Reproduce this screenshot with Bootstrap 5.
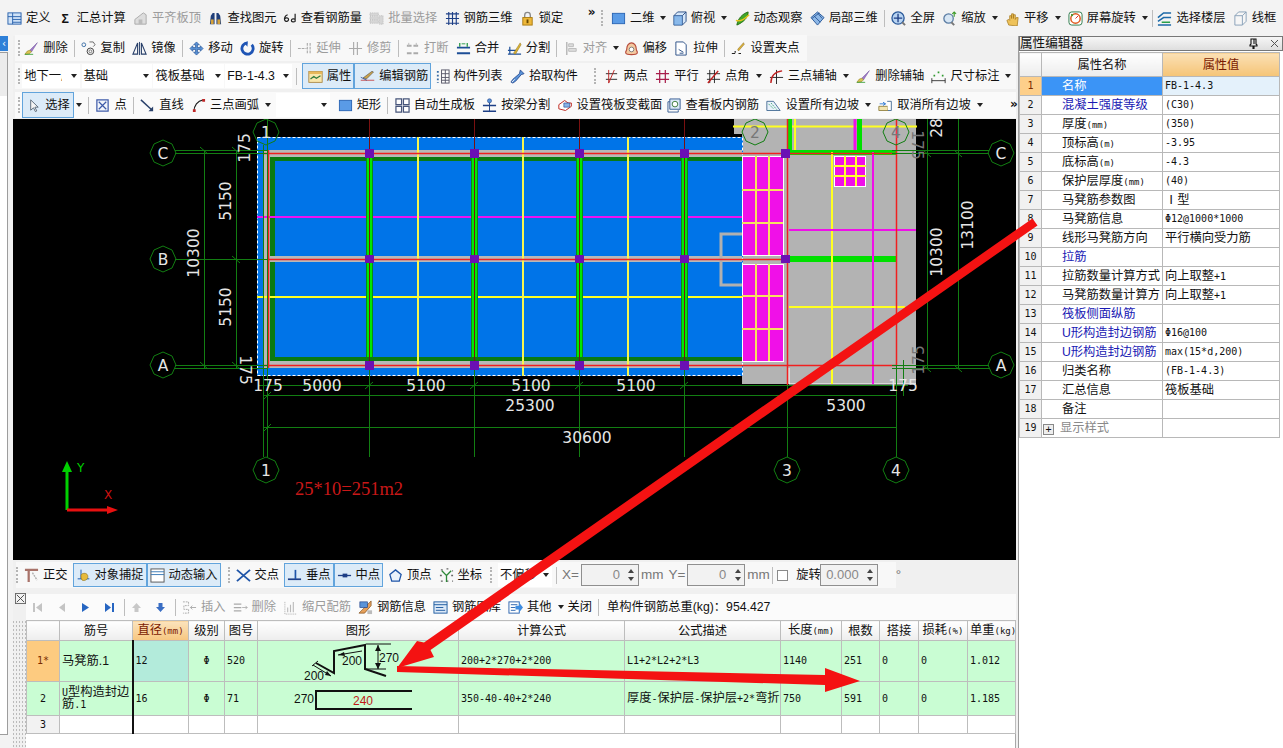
<!DOCTYPE html>
<html lang="zh">
<head>
<meta charset="utf-8">
<title>属性编辑器</title>
<link href="https://cdn.jsdelivr.net/npm/bootstrap@5.3.0/dist/css/bootstrap.min.css" rel="stylesheet">
<style>
html,body{height:100%;}
body{width:1283px;height:748px;overflow:hidden;background:#f0f0f0;color:#111;font:12.25px/16px "Liberation Sans","Noto Sans CJK SC",sans-serif;}
.top-shell{position:relative;width:1283px;height:748px;overflow:hidden;}
.tbar{display:flex;align-items:center;gap:7.3px;white-space:nowrap;}
.r1{height:36px;padding-left:7px;background:#f3f3f3;}
.r2{height:26px;width:792px;margin-left:2px;padding-left:3px;background:#f8f8f8;margin-bottom:2px;margin-top:-1px;}
.r3{height:26px;padding-left:3px;margin-left:2px;background:#f8f8f8;margin-bottom:3px;}
.r4{height:26px;padding-left:3px;margin-left:2px;background:#fafafa;margin-bottom:1px;}
.ti{display:inline-flex;align-items:center;gap:4px;}
.ti svg,.ic{width:15px;height:15px;flex:none;}
.off{color:#9c9c9c;}
.on{border:1px solid #62a4dc;background:#dcebf8;height:24px;padding:0 2px;}
.r3 .on{height:26px;padding:0 2px 0 5px;}
.r4 .on{height:26px;padding:0 3px;}
.car{display:inline-block;width:0;height:0;border:3px solid transparent;border-top:4px solid #222;border-bottom:0;margin-left:2px;flex:none;}
.sepv{width:1px;height:17px;background:#bdbdbd;flex:none;margin:0 -1px;}
.grip{width:3px;height:16px;flex:none;border-left:2px dotted #b5b5b5;}
.chev{font:bold 12px/10px "DejaVu Sans",sans-serif;align-self:flex-start;margin-top:7px;}
.combo{display:inline-flex;align-items:center;justify-content:space-between;background:#fff;height:24px;padding:0 3px 0 2px;flex:none;}
.combo .car{margin:0;}
.cb-a{width:58px;}.cb-a span{display:block;width:38px;overflow:hidden;}
.cb-b{width:70.5px;}.cb-c{width:70.5px;}.cb-d{width:67px;}.cb-e{width:54px;}
.first{margin-left:-4px;}
.g1{margin-left:17px;}.g3{margin-left:20px;}.g4{margin-left:-3px;}.g5{margin-left:-6px;}.g6{margin-left:9px;}.g7{margin-left:-2px;}.g8{margin-left:2px;}.g9{margin-left:3px;}.g11{margin-left:-4px;}.g13{margin-left:13px;}
.wrap{display:flex;height:712px;}
.leftcol{width:13px;flex:none;position:relative;background:#f3f3f3;}
.tabmark{height:15px;width:8px;background:#2f80d8;color:#fff;font:10px/15px "DejaVu Sans",sans-serif;text-align:center;}
.leftpanel{height:683px;width:8px;margin-top:1px;background:linear-gradient(#ececec 0 43px,#fff 43px);border:1px solid #9d9d9d;border-left:0;}
.maincol{width:1003px;flex:none;display:flex;flex-direction:column;}
.canvas{height:441px;background:#000;flex:none;display:block;}
.canvas text{font-family:"DejaVu Sans",sans-serif;fill:#e6e6e6;font-size:15.5px;}
.snap{height:34px;padding:2px 0 6px 3px;flex:none;}
.snap .inner,.rebar .inner{display:flex;align-items:center;white-space:nowrap;height:100%;}
.snap .inner{gap:5px;background:#f8f8f8;width:880px;}
.cluster{display:flex;align-items:center;gap:2px;margin-left:1px;}
.mono{font-family:"DejaVu Sans Mono","Noto Sans CJK SC",monospace;font-size:10px;}
.spinb{width:58px;height:22px;border:1px solid #8f8f8f;background:#f2f2f2;display:flex;align-items:center;justify-content:flex-end;color:#888;font-size:13px;flex:none;}
.spinb i{display:flex;flex-direction:column;gap:4px;width:13px;align-items:center;margin-left:5px;}
.spinb b{display:block;width:0;height:0;border:3px solid transparent;}
.spinb b.u{border-bottom:4px solid #444;border-top:0;}
.spinb b.d{border-top:4px solid #444;border-bottom:0;}
.chk{width:11px;height:11px;border:1px solid #8a8a8a;background:#fff;flex:none;}
.gt{color:#777;font-size:13.5px;}
.rebar{height:26px;flex:none;display:flex;position:relative;}
.rb-strip{width:13px;flex:none;position:relative;}
.rebar .inner{gap:7px;background:#fbfbfb;flex:1;padding-left:3px;}
.navb{width:17px;display:flex;justify-content:center;flex:none;}
.navb svg{width:11px;height:11px;}
.x-box{position:absolute;left:2px;top:-1px;width:11px;height:11px;}
.tablearea{display:flex;flex:1;min-height:0;}
.dotstrip{width:13px;flex:none;background-image:radial-gradient(#bbb 1px,transparent 1px);background-size:3px 4px;background-position:2px 0;}
.gridcol{width:990px;flex:none;background:#fff;border-right:1px solid #a8a8a8;}
.rtable{table-layout:fixed;width:989px;border-collapse:collapse;margin:0;font-size:12.25px;line-height:12px;color:#111;}
.rtable th,.rtable td{border:1px solid #bdbdbd;padding:0 2px;vertical-align:middle;overflow:hidden;white-space:nowrap;}
.rtable thead th{height:20px;background:linear-gradient(#fff,#ededed);font-weight:400;text-align:center;}
.rtable thead th.hot{background:linear-gradient(#fbe3bd,#f7c67f);color:#7a1a00;}
.rtable tbody tr.a{height:41px;}.rtable tbody tr.b{height:32px;}.rtable tbody tr.c{height:18px;}
.rtable tbody tr.a td,.rtable tbody tr.b td{background:#c9fdd3;}
.rtable tbody td.num{background:#f2f2f2;text-align:center;}
.rtable tbody tr.a td.num{background:#fdcb80;color:#7a2a00;}
.rtable tbody tr.a td.sel{background:#b3ebdb;}
.rtable td.bl{border-right:2px solid #111;}
.rtable td.cc{text-align:center;}
.rtable td.fig{padding:0;}
.rtable td.wr{white-space:normal;line-height:11.5px;}
.fig svg{display:block;width:200px;height:100%;}
.fig text{font:12px "Liberation Sans",sans-serif;fill:#111;}
.fig text.rd{fill:#c01818;}
.mm{font-size:9px;font-family:"DejaVu Sans Mono",monospace;}
.c0{width:33px;}.c1{width:73px;}.c2{width:56px;}.c3{width:36px;}.c4{width:33px;}.c5{width:201px;}.c6{width:166px;}.c7{width:156px;}.c8{width:61px;}.c9{width:38px;}.c10{width:39px;}.c11{width:49px;}.c12{width:48px;}
.prop{width:265px;flex:none;margin-left:2px;background:#fff;border-left:1px solid #9d9d9d;display:flex;flex-direction:column;}
.ptitle{height:15px;display:flex;align-items:center;justify-content:space-between;background:linear-gradient(#f6f6f6,#dedede);border:1px solid #777;font-size:12.6px;line-height:13px;padding:0 3px 0 0;flex:none;}
.ptitle span.pins{display:flex;gap:12px;align-items:center;font-family:"DejaVu Sans",sans-serif;}
.ptbl{table-layout:fixed;width:260px;border-collapse:collapse;margin:1px 0 0;font-size:12.25px;line-height:14px;color:#111;}
.ptbl th,.ptbl td{border:1px solid #b8b8b8;padding:0 2px;height:19px;overflow:hidden;white-space:nowrap;vertical-align:middle;}
.ptbl thead th{height:24px;background:linear-gradient(#fff,#ececec);font-weight:400;text-align:center;}
.ptbl thead th.hot{background:linear-gradient(#fbe0b5,#f5c476);color:#7a1a00;}
.ptbl td.num{background:#f1f1f1;text-align:center;font-family:"DejaVu Sans Mono",monospace;font-size:10px;padding:0;}
.ptbl td.nm{padding-left:20px;}
.ptbl tr.act td.num{background:#fdcf8a;color:#7a2a00;}
.ptbl tr.act td.nm{background:#3b94f6;color:#fff;}
.ptbl tr.act td.vl{background:#e4f1fb;}
.ptbl td.lnk{color:#1a1ab4;}
.ptbl td.gr{color:#8a8a8a;padding-left:1px;}
.ptbl .vm{font:10px/14px "DejaVu Sans Mono","Noto Sans CJK SC",monospace;}
.p1{width:22px;}.p2{width:121px;}.p3{width:117px;}
.pm{display:inline-block;width:11px;height:11px;border:1px solid #888;background:#eee;text-align:center;font:10px/9px "DejaVu Sans Mono",monospace;color:#111;margin:0 6px 0 0;vertical-align:-1px;}
.overlay{position:absolute;left:0;top:0;pointer-events:none;}
</style>
</head>
<body>
<svg width="0" height="0" class="d-none">
<defs>
<symbol id="def" viewBox="0 0 16 16"><rect x="1" y="2" width="14" height="12" fill="#cfe2f7" stroke="#2a62ad"/><path d="M1 6h14M6 2v12M6 9h9M6 12h9" stroke="#2a62ad" fill="none"/></symbol>
<symbol id="flat" viewBox="0 0 16 16"><path d="M2 14V9l9-7 3 2v10z" fill="#ddd" stroke="#aaa"/><path d="M6 14V9h4v5" fill="#bbb"/></symbol>
<symbol id="bino" viewBox="0 0 16 16"><path d="M2 14l1-9 2-3h2v12zM9 14V2h2l2 3 1 9z" fill="#1f3f7a"/><rect x="3" y="9" width="3" height="5" fill="#d6a23a"/><rect x="10" y="9" width="3" height="5" fill="#d6a23a"/></symbol>
<symbol id="sixd" viewBox="0 0 16 16"><path d="M6 4C3 5 2 8 3 10s4 1 4-1-3-2-4-1M14 3v8c-1 1-4 1-4-1s3-2 4-1" fill="none" stroke="#222" stroke-width="1.3"/></symbol>
<symbol id="batch" viewBox="0 0 16 16"><path d="M1 2h9v3H1zM1 6h9v3H1zM1 10h9v3H1zM11 5h4v9h-4z" fill="#d6d6d6" stroke="#bbb" stroke-dasharray="1 1"/></symbol>
<symbol id="r3d" viewBox="0 0 16 16"><path d="M1 3h14M1 8h14M1 13h14M4 1v14M8 1v14M12 1v14" stroke="#1d3f86" stroke-width="1.2" fill="none"/></symbol>
<symbol id="lock" viewBox="0 0 16 16"><path d="M5 7V4.500a3 3 0 016 0V7" stroke="#888" stroke-width="1.4" fill="none"/><rect x="3" y="7" width="10" height="8" fill="#eeb83a" stroke="#a97a10"/><rect x="7" y="9" width="2" height="4" fill="#6a4a00"/></symbol>
<symbol id="sq" viewBox="0 0 16 16"><rect x="1.500" y="2.500" width="13" height="11" fill="#5a9be6" stroke="#2b66b5"/></symbol>
<symbol id="cube" viewBox="0 0 16 16"><path d="M2 5l4-4h9v10l-4 4H2z" fill="#d5e6f8" stroke="#2b4f86"/><path d="M2 5h9v10M11 5l4-4" fill="none" stroke="#2b4f86"/><path d="M2 5h9v10H2z" fill="#4d93de" fill-opacity=".55"/></symbol>
<symbol id="orbit" viewBox="0 0 16 16"><path d="M2 15C3 8 8 3 14 1c0 6-5 11-12 14z" fill="#42a828" stroke="#1f6b12"/><path d="M1 10c5 2 10-2 14-6" stroke="#e6c31d" stroke-width="1.6" fill="none"/></symbol>
<symbol id="loc3" viewBox="0 0 16 16"><path d="M8 1l7 6-7 8-7-8z" fill="#8db7e6" stroke="#2b5a9a"/><path d="M4 5l7 7M8 2l5 6M2 8l8-6" stroke="#2b5a9a" fill="none"/></symbol>
<symbol id="fit" viewBox="0 0 16 16"><circle cx="7.500" cy="7.500" r="6.500" fill="#b8d4f2" stroke="#2b5a9a" stroke-width="1.4"/><path d="M7.500 3v9M3 7.500h9" stroke="#1f3f86" stroke-width="1.4"/><path d="M12 12l3 3" stroke="#777" stroke-width="2"/></symbol>
<symbol id="zm" viewBox="0 0 16 16"><circle cx="7" cy="8" r="5" fill="#d7e6f4" stroke="#5a7ca3" stroke-width="1.4"/><path d="M10 12l3 3" stroke="#777" stroke-width="2"/><path d="M13 1v5M11 3l2-2 2 2" fill="none" stroke="#3c9a2a" stroke-width="1.2"/></symbol>
<symbol id="hand" viewBox="0 0 16 16"><path d="M4 15l-2-5 2-1 1 1V5h2v3-5h2v5-4h2v5l1-2h2l-1 9z" fill="#eec25a" stroke="#a87c20" stroke-width=".8"/></symbol>
<symbol id="rott" viewBox="0 0 16 16"><rect x="1" y="1" width="14" height="14" rx="3" fill="#fff" stroke="#2b7a4a"/><circle cx="8" cy="8" r="5" fill="#fff" stroke="#e05a20" stroke-width="1.6"/><path d="M8 8l3-3" stroke="#d22"/><path d="M3 3l3 1-2 2z" fill="#2a9a2a"/></symbol>
<symbol id="floors" viewBox="0 0 16 16"><path d="M1 7l6-5h8M1 11l6-4h8M1 15h14" fill="none" stroke="#1c6aa8" stroke-width="1.6"/><path d="M5 12h9" stroke="#2aa04a" stroke-width="1.6"/></symbol>
<symbol id="wire" viewBox="0 0 16 16"><path d="M2 5l4-4h8v10l-4 4H2zM2 5h8v10M10 5l4-4" fill="#f6f6f6" stroke="#88a0b8"/></symbol>
<symbol id="brush" viewBox="0 0 18 16"><path d="M16 1L7 10l2 2z" fill="#a079c8" stroke="#6a4a9a" stroke-width=".6"/><path d="M7 10l-3 1-3 4c3 0 6 0 8-3z" fill="#d9c252" stroke="#8a7a1a" stroke-width=".6"/><path d="M1 15h10" stroke="#2f9a2f"/></symbol>
<symbol id="copy" viewBox="0 0 16 16"><circle cx="3" cy="4" r="2" fill="none" stroke="#3a6ea5"/><circle cx="10" cy="11" r="3.500" fill="none" stroke="#3a3a3a"/><circle cx="10" cy="11" r="1.500" fill="none" stroke="#777"/><path d="M9 1h4l2 3-2 2" fill="none" stroke="#666"/></symbol>
<symbol id="mir" viewBox="0 0 16 16"><path d="M6 2L1 14h5zM10 2l5 12h-5z" fill="none" stroke="#29406a" stroke-width="1.2"/><path d="M8 1v14" stroke="#29406a"/></symbol>
<symbol id="mv" viewBox="0 0 16 16"><path d="M8 1l3 3H9v3h3V5l3 3-3 3V9H9v3h2l-3 3-3-3h2V9H4v2L1 8l3-3v2h3V4H5z" fill="#5b93d6" stroke="#1f4f96" stroke-width=".7"/></symbol>
<symbol id="rot" viewBox="0 0 16 16"><path d="M8 2a6 6 0 104.500 2" fill="none" stroke="#1f55b5" stroke-width="3"/><path d="M8 0v6l-3-3z" fill="#1f55b5"/></symbol>
<symbol id="ext" viewBox="0 0 16 16"><path d="M1 8h9M11 2v12M14 2v12" stroke="#aaa" stroke-width="1.2" fill="none" stroke-dasharray="3 1"/></symbol>
<symbol id="trim" viewBox="0 0 16 16"><path d="M6 1v14M10 1v14M1 8h14" stroke="#aaa" stroke-width="1.2" fill="none"/></symbol>
<symbol id="brk" viewBox="0 0 16 16"><path d="M2 5h12M2 13h12" stroke="#aaa" stroke-width="2" stroke-dasharray="5 2"/><path d="M4 2v4M12 2v4" stroke="#bbb"/></symbol>
<symbol id="mrg" viewBox="0 0 16 16"><path d="M1 7h14M1 13h14" stroke="#1d4e96" stroke-width="2"/><path d="M4 2v4M12 2v4" stroke="#2a9a4a" stroke-width="1.4"/><path d="M6 3h4" stroke="#2a9a4a"/></symbol>
<symbol id="spl" viewBox="0 0 16 16"><path d="M1 14h14M1 10h10M3 6v8" stroke="#1d4e96" stroke-width="1.3" fill="none"/><path d="M7 13L14 2l1 2-6 10z" fill="#dbb436" stroke="#8a6a10" stroke-width=".5"/></symbol>
<symbol id="algn" viewBox="0 0 16 16"><path d="M3 1v14" stroke="#aaa" stroke-width="1.3"/><path d="M5 3h5v3H5zM5 8h8v3H5z" fill="#ddd" stroke="#bbb"/></symbol>
<symbol id="ofs" viewBox="0 0 16 16"><path d="M8 2c3 0 5 3 5 6s2 3 1 5-11 2-12 0 1-2 1-5 2-6 5-6z" fill="#f3c9a0" stroke="#b64a3a" stroke-width="1.2"/><circle cx="8" cy="9" r="2.500" fill="#fff" stroke="#7a7a7a"/></symbol>
<symbol id="str" viewBox="0 0 16 16"><path d="M2 1h8l3 3v11H2z" fill="#fff" stroke="#2b4f86"/><path d="M5 9l5 3M6 13h4" stroke="#2b4f86" fill="none"/></symbol>
<symbol id="grp" viewBox="0 0 18 16"><path d="M15 1L8 9l1 2 7-8z" fill="#d9b13a" stroke="#7a5a10" stroke-width=".5"/><path d="M1 14h4M9 14h3M5 11v2" stroke="#222" stroke-width="1.4"/></symbol>
<symbol id="attr" viewBox="0 0 18 16"><rect x="1" y="2" width="16" height="13" fill="#f9e7ad" stroke="#a6803a"/><path d="M1 2h16v3H1z" fill="#e7b85a"/><path d="M3 11l4-3 3 2 5-3" stroke="#2f7a3a" stroke-width="1.5" fill="none"/></symbol>
<symbol id="edit" viewBox="0 0 20 16"><path d="M1 13h18" stroke="#c02828"/><path d="M4 10l5 1L18 2l-2-1z" fill="#caa24a" stroke="#444" stroke-width=".7"/><path d="M1 9l8 4" stroke="#1d3f86"/></symbol>
<symbol id="list" viewBox="0 0 16 16"><path d="M2 2h2v2H2zM2 6h2v2H2zM2 10h2v2H2zM2 14h2v1H2z" fill="#3a6ea5"/><rect x="7" y="1" width="8" height="14" fill="#fff" stroke="#556"/><path d="M7 5h8M7 9h8M7 12h8M11 1v14" stroke="#556"/></symbol>
<symbol id="pick" viewBox="0 0 16 16"><path d="M11 1l4 4-3 1-6 7-3 2-2-1 2-3 7-6z" fill="#5a93d8" stroke="#1d3f86" stroke-width=".8"/><path d="M2 14l3-3" stroke="#eee"/></symbol>
<symbol id="two" viewBox="0 0 16 16"><path d="M2 5h12M2 11h12" stroke="#222"/><path d="M5 1v14M11 1l-6 14" stroke="#b22"/></symbol>
<symbol id="para" viewBox="0 0 16 16"><path d="M5 1v14M11 1v14M1 5h14M1 11h14" stroke="#a81c4a" stroke-width="1.3"/></symbol>
<symbol id="ang" viewBox="0 0 16 16"><path d="M1 5h14M1 11h14M4 1v14M9 1v14" stroke="#222"/><path d="M2 15L13 2" stroke="#c02020" stroke-width="1.6"/></symbol>
<symbol id="tri" viewBox="0 0 16 16"><path d="M8 1v15M1 9h14" stroke="#222"/><path d="M2 15C2 8 6 3 14 2" stroke="#c02020" stroke-width="1.5" fill="none"/></symbol>
<symbol id="dim" viewBox="0 0 18 16"><path d="M1 13h16M1 10v6M17 10v6" stroke="#222"/><path d="M3 7h2M8 3h2M13 7h2" stroke="#2f9a2f" stroke-width="2"/></symbol>
<symbol id="arrowc" viewBox="0 0 16 16"><path d="M5 2v11l3-2.500 2 4 1.500-.7-2-4H13z" fill="#f5f5f5" stroke="#5a6a7a"/></symbol>
<symbol id="pnt" viewBox="0 0 16 16"><rect x="2" y="2" width="12" height="12" fill="#f2f6fb" stroke="#3d5aa8" stroke-width="1.3"/><path d="M4 4l8 8M12 4l-8 8" stroke="#3d5aa8" stroke-width="1.3"/></symbol>
<symbol id="lin" viewBox="0 0 16 16"><path d="M1 2l12 11" stroke="#29406a" stroke-width="1.5"/><path d="M14 14v-5l-5 5z" fill="#29406a"/></symbol>
<symbol id="arc" viewBox="0 0 16 16"><path d="M3 15C3 8 7 3 13 2" stroke="#1d1d1d" stroke-width="1.2" fill="none"/><path d="M2 12h3v3H2zM12 1h3v3h-3z" fill="#c02828"/></symbol>
<symbol id="auto" viewBox="0 0 16 16"><path d="M1 1h6v6H1zM9 1h6v6H9zM1 9h6v6H1zM9 9h6v6H9z" fill="#fff" stroke="#47557a" stroke-width="1.3"/></symbol>
<symbol id="splb" viewBox="0 0 16 16"><path d="M1 8h14M1 14h14" stroke="#1d3f86" stroke-width="1.6"/><circle cx="8" cy="3" r="2.200" fill="#5a93d8" stroke="#1d3f86" stroke-width=".6"/><path d="M8 5v10" stroke="#1d3f86"/></symbol>
<symbol id="chg" viewBox="0 0 18 16"><path d="M1 7l7-5 4 3 4 0 0 4-7 5-8-2z" fill="#fff" stroke="#c03028" stroke-width="1.2"/><path d="M7 5h7v5H7z" fill="#88b3e8" stroke="#1d3f86" stroke-width=".7"/></symbol>
<symbol id="view" viewBox="0 0 16 16"><path d="M3 1h11v11H3z" fill="#dbe9f8" stroke="#385d92"/><path d="M1 4h2M1 4v11h11v-2" fill="none" stroke="#385d92"/><circle cx="8.500" cy="6.500" r="3" fill="#fff" stroke="#3b7a3b"/></symbol>
<symbol id="slp" viewBox="0 0 18 16"><path d="M1 3h8l8 11H1z" fill="#e9f2fb" stroke="#36608c"/><path d="M3 6l6 6M6 5l7 8" stroke="#36a06a" stroke-dasharray="2 1"/></symbol>
<symbol id="cnc" viewBox="0 0 18 16"><path d="M1 9h11v5H1z" fill="#f3e5b1" stroke="#8c7a36"/><path d="M11 3h5v11h-4" fill="#fff" stroke="#36608c"/><path d="M2 6h7M6 4l3 2-3 2" stroke="#1d6ed0" fill="none"/></symbol>
<symbol id="orth" viewBox="0 0 16 16"><path d="M1 2h14M5 2v13" stroke="#a8736a" stroke-width="2.400"/><path d="M9 5l5 8" stroke="#b0b0b0" stroke-width="1.500" stroke-dasharray="2 1"/></symbol>
<symbol id="snap1" viewBox="0 0 18 16"><path d="M2 12h14M6 1v11" stroke="#1c5fb5" stroke-width="1.2"/><path d="M6 8c0-3 7-4 8 0s-2 6-5 6-3-3-3-6z" fill="#e7ba3b" stroke="#8a6a10" stroke-width=".7"/></symbol>
<symbol id="dyn" viewBox="0 0 16 16"><rect x="1" y="1" width="14" height="14" fill="#fff" stroke="#555"/><path d="M1 4h14M1 7h14" stroke="#3a7ab5"/></symbol>
<symbol id="xx" viewBox="0 0 16 16"><path d="M1 2l14 12M15 2L1 14" stroke="#1f55a8" stroke-width="2"/></symbol>
<symbol id="perp" viewBox="0 0 16 16"><path d="M1 12h14" stroke="#1f3f86" stroke-width="1.8"/><path d="M9 2v10" stroke="#1f55a8" stroke-width="1.800"/></symbol>
<symbol id="midp" viewBox="0 0 16 16"><path d="M1 8h14" stroke="#1f3f86" stroke-width="1.400"/><rect x="6" y="6" width="5" height="4" fill="#1f3f86"/></symbol>
<symbol id="pent" viewBox="0 0 16 16"><path d="M8 2l6 5-2 7H4L2 7z" fill="#eaf2fb" stroke="#1f55a8" stroke-width="1.400"/></symbol>
<symbol id="crd" viewBox="0 0 16 16"><path d="M2 2h2M8 1h2M14 3h1M1 8h2M13 8h2M2 14h2M8 14h2M14 14h1" stroke="#666" stroke-width="1.4"/><path d="M8 15V8L3 3M8 8l5-5" stroke="#2f8a3a" stroke-width="1.400" fill="none"/></symbol>
<symbol id="ins" viewBox="0 0 16 16"><path d="M1 2h6v4H2v4h5v4H1" fill="none" stroke="#aaa" stroke-dasharray="2 1"/><path d="M9 8h6M11 6l-2 2 2 2" stroke="#aaa" fill="none"/></symbol>
<symbol id="dlt" viewBox="0 0 18 16"><path d="M1 4h9M1 8h9M1 12h9" stroke="#aaa" stroke-width="1.500"/><path d="M11 8h6M15 6l2 2-2 2" stroke="#aaa" fill="none"/></symbol>
<symbol id="scl" viewBox="0 0 14 16"><path d="M1 2v13h12" stroke="#aaa" fill="none" stroke-dasharray="1 1"/><path d="M4 13V8M7 13V5M10 13V2" stroke="#bbb" stroke-width="1.200"/></symbol>
<symbol id="info" viewBox="0 0 16 16"><path d="M1 14L14 1v5L7 14z" fill="#e6a05a" stroke="#7a4a1a" stroke-width=".7"/><rect x="2" y="2" width="8" height="6" fill="#5a93d8" stroke="#1d3f86" stroke-width=".7"/><path d="M10 11h5v4h-5z" fill="#bbb"/></symbol>
<symbol id="lib" viewBox="0 0 16 16"><rect x="1" y="2" width="14" height="12" fill="#dce9f7" stroke="#1d5aa0"/><path d="M1 5h14M3 8h8M3 11h10" stroke="#1d5aa0"/></symbol>
<symbol id="oth" viewBox="0 0 16 16"><rect x="1" y="2" width="11" height="12" fill="#fff" stroke="#2a62ad"/><path d="M3 5h7M3 8h5M3 11h5" stroke="#2a62ad"/><path d="M8 6h4V3l4 5-4 5v-3H8z" fill="#3f8de0"/></symbol>
</defs>
</svg>

<div class="top-shell">
  <div class="tbar r1">
    <span class="ti"><svg><use href="#def"/></svg>定义</span>
    <span class="ti"><span class="ic text-center fw-bold">Σ</span>汇总计算</span>
    <span class="ti off"><svg><use href="#flat"/></svg>平齐板顶</span>
    <span class="ti"><svg><use href="#bino"/></svg>查找图元</span>
    <span class="ti g7"><svg><use href="#sixd"/></svg>查看钢筋量</span>
    <span class="ti off"><svg><use href="#batch"/></svg>批量选择</span>
    <span class="ti"><svg><use href="#r3d"/></svg>钢筋三维</span>
    <span class="ti"><svg><use href="#lock"/></svg>锁定</span>
    <span class="chev g1">»</span>
    <span class="grip g7"></span>
    <span class="ti"><svg><use href="#sq"/></svg>二维<i class="car"></i></span>
    <span class="ti g7"><svg><use href="#cube"/></svg>俯视<i class="car"></i></span>
    <span class="ti"><svg><use href="#orbit"/></svg>动态观察</span>
    <span class="ti"><svg><use href="#loc3"/></svg>局部三维</span>
    <span class="sepv"></span>
    <span class="ti"><svg><use href="#fit"/></svg>全屏</span>
    <span class="ti"><svg><use href="#zm"/></svg>缩放<i class="car"></i></span>
    <span class="ti"><svg><use href="#hand"/></svg>平移<i class="car"></i></span>
    <span class="ti"><svg><use href="#rott"/></svg>屏幕旋转<i class="car"></i></span>
    <span class="sepv g4"></span>
    <span class="ti g7"><svg><use href="#floors"/></svg>选择楼层</span>
    <span class="ti"><svg><use href="#wire"/></svg>线框</span>
  </div>
  <div class="wrap">
    <div class="leftcol">
      <div class="tabmark">‹</div>
      <div class="leftpanel"></div>
    </div>
    <div class="maincol">
      <div class="tbar r2">
        <span class="grip"></span>
        <span class="ti first"><svg class="ic"><use href="#brush"/></svg>删除</span><span class="sepv"></span>
        <span class="ti"><svg><use href="#copy"/></svg>复制</span>
        <span class="ti"><svg><use href="#mir"/></svg>镜像</span><span class="sepv"></span>
        <span class="ti"><svg><use href="#mv"/></svg>移动</span>
        <span class="ti"><svg><use href="#rot"/></svg>旋转</span><span class="sepv"></span>
        <span class="ti off"><svg><use href="#ext"/></svg>延伸</span>
        <span class="ti off"><svg><use href="#trim"/></svg>修剪</span><span class="sepv"></span>
        <span class="ti off"><svg><use href="#brk"/></svg>打断</span>
        <span class="ti"><svg><use href="#mrg"/></svg>合并</span>
        <span class="ti"><svg><use href="#spl"/></svg>分割</span><span class="sepv"></span>
        <span class="ti off"><svg><use href="#algn"/></svg>对齐<i class="car"></i></span>
        <span class="ti g4"><svg><use href="#ofs"/></svg>偏移</span>
        <span class="ti"><svg><use href="#str"/></svg>拉伸</span><span class="sepv"></span>
        <span class="ti"><svg><use href="#grp"/></svg>设置夹点</span>
      </div>
      <div class="tbar r3">
        <span class="grip"></span>
        <span class="combo cb-a g5"><span>地下一层</span><i class="car"></i></span>
        <span class="combo cb-b g5"><span>基础</span><i class="car"></i></span>
        <span class="combo cb-c g5"><span>筏板基础</span><i class="car"></i></span>
        <span class="combo cb-d g5"><span>FB-1-4.3</span><i class="car"></i></span>
        <span class="sepv g4"></span>
        <span class="d-inline-flex g7">
          <span class="ti on"><svg><use href="#attr"/></svg>属性</span>
          <span class="ti on"><svg><use href="#edit"/></svg>编辑钢筋</span>
        </span>
        <span class="ti g11"><svg><use href="#list"/></svg>构件列表</span>
        <span class="ti"><svg><use href="#pick"/></svg>拾取构件</span>
        <span class="grip g6"></span>
        <span class="ti"><svg><use href="#two"/></svg>两点</span>
        <span class="ti"><svg><use href="#para"/></svg>平行</span>
        <span class="ti"><svg><use href="#ang"/></svg>点角<i class="car"></i></span>
        <span class="ti"><svg><use href="#tri"/></svg>三点辅轴<i class="car"></i></span>
        <span class="ti"><svg class="ic"><use href="#brush"/></svg>删除辅轴</span>
        <span class="ti"><svg class="ic"><use href="#dim"/></svg>尺寸标注<i class="car"></i></span>
      </div>
      <div class="tbar r4">
        <span class="grip"></span>
        <span class="d-inline-flex align-items-center g5">
          <span class="ti on"><svg><use href="#arrowc"/></svg>选择</span><i class="car"></i>
        </span>
        <span class="sepv"></span>
        <span class="ti"><svg><use href="#pnt"/></svg>点</span><span class="sepv"></span>
        <span class="ti"><svg><use href="#lin"/></svg>直线</span>
        <span class="ti"><svg><use href="#arc"/></svg>三点画弧<i class="car"></i></span>
        <span class="combo cb-e g7"><span></span><i class="car"></i></span>
        <span class="ti"><svg><use href="#sq"/></svg>矩形</span><span class="sepv"></span>
        <span class="ti"><svg><use href="#auto"/></svg>自动生成板</span>
        <span class="ti"><svg><use href="#splb"/></svg>按梁分割</span>
        <span class="ti"><svg class="ic"><use href="#chg"/></svg>设置筏板变截面</span>
        <span class="ti g4"><svg><use href="#view"/></svg>查看板内钢筋</span>
        <span class="ti"><svg class="ic"><use href="#slp"/></svg>设置所有边坡<i class="car"></i></span>
        <span class="ti"><svg class="ic"><use href="#cnc"/></svg>取消所有边坡<i class="car"></i></span>
        <span class="chev g3">»</span>
      </div>

      <svg class="canvas" width="1003" height="441" viewBox="13 119 1003 441">
        <path d="M734 119h182v265H742V134h-8z" fill="#b3b3b3"/>
        <path d="M789 368v16h127" fill="none" stroke="#fff"/>
        <rect x="257" y="137" width="486" height="239" fill="#0074e8"/>
        <rect x="257.500" y="137.500" width="485" height="238" fill="none" stroke="#fff" stroke-dasharray="3 2"/>
        <path d="M263 150h479v7H270v204h472v7H263z" fill="#b8b8b8"/>
        <path d="M270 157h472v4H275v95h-5zM270 262h5v95h467v4H270z" fill="#0a7a12"/>
        <rect x="270" y="256" width="472" height="6" fill="#b8b8b8"/>
        <path d="M257 217h485" stroke="#f010f0" stroke-width="2"/>
        <path d="M257 297h485" stroke="#ffff20" stroke-width="2"/>
        <path d="M418 137v239M523 137v239M628 137v239" stroke="#f6f650" stroke-width="2"/>
        <g fill="#0a8a14">
          <rect x="366" y="157" width="7" height="200"/><rect x="471" y="157" width="7" height="200"/><rect x="576" y="157" width="7" height="200"/><rect x="681" y="157" width="7" height="200"/>
        </g>
        <g fill="#00e800">
          <rect x="367" y="157" width="5" height="200"/><rect x="472" y="157" width="5" height="200"/><rect x="577" y="157" width="5" height="200"/><rect x="682" y="157" width="5" height="200"/>
        </g>
        <path d="M369.500 119v246M474.500 119v246M579.500 119v246M684.500 119v246" stroke="#7a1010"/>
        <g fill="#f010e8" stroke="#fff">
          <rect x="742.500" y="156.500" width="41" height="99"/>
          <rect x="742.500" y="264.500" width="41" height="97"/>
          <rect x="834.500" y="156.500" width="31" height="30"/>
        </g>
        <path d="M756 156v99M769 156v99M756 264v97M769 264v97" stroke="#f6e060" stroke-width="2"/>
        <path d="M742 190h41M742 223h41M742 296h41M742 329h41" stroke="#f6e060" stroke-width="2"/>
        <path d="M845 156v30M856 156v30M834 166h32M834 176h32" stroke="#ffff30" stroke-width="2"/>
        <path d="M742 234h-21v51h21" fill="none" stroke="#b0b0b0" stroke-width="3"/>
        <path d="M733 126.500h184" stroke="#ffff20" stroke-width="2"/>
        <path d="M795 119v33" stroke="#ffff20" stroke-width="2"/>
        <rect x="787" y="119" width="5" height="34" fill="#00e000"/>
        <rect x="857" y="119" width="5" height="34" fill="#00e000"/>
        <path d="M855 119v33" stroke="#f010e8" stroke-width="3"/>
        <rect x="789" y="150" width="107" height="5" fill="#00e000"/>
        <rect x="789" y="256" width="107" height="6" fill="#00e000"/>
        <path d="M832 152v232" stroke="#ffff20" stroke-width="2"/>
        <path d="M873 152v232" stroke="#f010e8" stroke-width="2"/>
        <path d="M789 230h127" stroke="#f010e8" stroke-width="2"/>
        <path d="M789 307h116" stroke="#ffff20" stroke-width="2"/>
        <path d="M263 153.500h633M268 259.500h517M263 365.500h633M268.500 150v218M787.500 119v266M896.500 119v246" stroke="#f02020" stroke-width="1.500"/>
        <g fill="#6a10b4">
          <rect x="365" y="149" width="9" height="9"/><rect x="470" y="149" width="9" height="9"/><rect x="575" y="149" width="9" height="9"/><rect x="680" y="149" width="9" height="9"/><rect x="781" y="149" width="9" height="9"/>
          <rect x="365" y="255" width="9" height="8"/><rect x="470" y="255" width="9" height="8"/><rect x="575" y="255" width="9" height="8"/><rect x="680" y="255" width="9" height="8"/><rect x="781" y="255" width="9" height="8"/>
          <rect x="365" y="361" width="9" height="9"/><rect x="470" y="361" width="9" height="9"/><rect x="575" y="361" width="9" height="9"/><rect x="680" y="361" width="9" height="9"/>
        </g>
        <g stroke="#127e12" fill="none">
          <path d="M175 150.500h92M175 153.500h92M175 259.500h92M175 365.500h92M175 368.500h92"/>
          <path d="M204.500 150v219M236.500 150v219"/>
          <path d="M263.500 145v312M267.500 119v338M369.500 370v87M474.500 370v87M579.500 370v87M684.500 370v87M787.500 385v72M896.500 365v92"/>
          <path d="M258 385.500h650M263 395.500h633M263 427.500h633"/>
          <path d="M892 150.500h97M892 153.500h97M892 365.500h97M892 368.500h97M927.500 119v249M958.500 119v249M903.500 360v36"/>
          <path d="M200 147l8 7M232 147l8 7M232 256l8 7M200 362l8 7M232 362l8 7M365 389l8-7M470 389l8-7M575 389l8-7M680 389l8-7M264 399l7-7M264 431l7-7M923 150l8 7M954 150l8 7M923 365l8 7M954 365l8 7"/>
          <path d="M163 140l9 4 4 9-4 9-9 4-9-4-4-9 4-9zM163 246l9 4 4 9-4 9-9 4-9-4-4-9 4-9zM163 352l9 4 4 9-4 9-9 4-9-4-4-9 4-9zM1001 140l9 4 4 9-4 9-9 4-9-4-4-9 4-9zM1001 352l9 4 4 9-4 9-9 4-9-4-4-9 4-9z"/>
          <path d="M266 119l9 4 4 9-4 9-9 4-9-4-4-9 4-9zM755 119l9 4 4 9-4 9-9 4-9-4-4-9 4-9zM896 119l9 4 4 9-4 9-9 4-9-4-4-9 4-9z"/>
          <path d="M266 457l9 4 4 9-4 9-9 4-9-4-4-9 4-9zM787 457l9 4 4 9-4 9-9 4-9-4-4-9 4-9zM896 457l9 4 4 9-4 9-9 4-9-4-4-9 4-9z"/>
        </g>
        <g text-anchor="middle">
          <text x="163" y="159">C</text><text x="163" y="265">B</text><text x="163" y="371">A</text>
          <text x="1001" y="159">C</text><text x="1001" y="371">A</text>
          <text x="266" y="138">1</text><text x="755" y="138" style="fill:#777">2</text><text x="896" y="138" style="fill:#777">4</text>
          <text x="266" y="476">1</text><text x="787" y="476">3</text><text x="896" y="476">4</text>
          <text x="268" y="391">175</text><text x="322" y="391">5000</text><text x="426" y="391">5100</text><text x="531" y="391">5100</text><text x="636" y="391">5100</text><text x="903" y="391">175</text>
          <text x="530" y="411">25300</text><text x="846" y="411">5300</text><text x="587" y="443">30600</text>
          <text transform="translate(199 253) rotate(-90)">10300</text>
          <text transform="translate(231 201) rotate(-90)">5150</text>
          <text transform="translate(231 307) rotate(-90)">5150</text>
          <text transform="translate(250 148) rotate(-90)">175</text>
          <text transform="translate(240 370) rotate(90)">175</text>
          <text transform="translate(942 252) rotate(-90)">10300</text>
          <text transform="translate(973 225) rotate(-90)">13100</text>
          <text transform="translate(942 128) rotate(-90)">28</text>
          <text transform="translate(912 145) rotate(90)" style="fill:#777">175</text>
          <text transform="translate(924 360) rotate(-90)" style="fill:#777">175</text>
        </g>
        <text x="295" y="495" style="font:18.5px 'Liberation Serif',serif;fill:#c81818">25*10=251m2</text>
        <path d="M67 510v-40" stroke="#00d000" stroke-width="3"/><path d="M67 461l-5 11h10z" fill="#00d000"/>
        <path d="M67 510h42" stroke="#e81010" stroke-width="3"/><path d="M118 510l-11-4v8z" fill="#e81010"/>
        <text x="77" y="472" style="font-size:12px;fill:#00d000">Y</text>
        <text x="104" y="499" style="font-size:12px;fill:#d01010">X</text>
      </svg>

      <div class="snap">
        <div class="inner">
          <span class="grip"></span>
          <span class="ti"><svg><use href="#orth"/></svg>正交</span>
          <span class="d-inline-flex">
            <span class="ti on"><svg class="ic"><use href="#snap1"/></svg>对象捕捉</span>
            <span class="ti on"><svg><use href="#dyn"/></svg>动态输入</span>
          </span>
          <span class="grip g8"></span>
          <span class="ti"><svg><use href="#xx"/></svg>交点</span>
          <span class="d-inline-flex">
            <span class="ti on"><svg><use href="#perp"/></svg>垂点</span>
            <span class="ti on"><svg><use href="#midp"/></svg>中点</span>
          </span>
          <span class="ti"><svg><use href="#pent"/></svg>顶点</span>
          <span class="ti g8"><svg><use href="#crd"/></svg>坐标</span>
          <span class="grip g9"></span>
          <span class="combo cb-e"><span>不偏移</span><i class="car"></i></span>
          <span class="sepv"></span>
          <span class="cluster">
            <span class="gt">X=</span><span class="spinb">0<i><b class="u"></b><b class="d"></b></i></span><span class="gt">mm</span><span class="gt g9">Y=</span><span class="spinb">0<i><b class="u"></b><b class="d"></b></i></span><span class="gt">mm</span>
          </span>
          <span class="sepv g4"></span>
          <span class="chk"></span>
          <span>&nbsp;旋转</span>
          <span class="spinb g5">0.000<i><b class="u"></b><b class="d"></b></i></span>
          <span class="gt g13">°</span>
        </div>
      </div>

      <div class="rebar">
        <div class="rb-strip">
          <svg class="x-box" viewBox="0 0 12 12"><rect x=".5" y=".5" width="11" height="11" fill="#f3f3f3" stroke="#666"/><path d="M2 2l8 8M10 2l-8 8" stroke="#444"/></svg>
        </div>
        <div class="inner">
          <span class="navb"><svg viewBox="0 0 11 11"><path d="M1 1h2v9H1zM10 1v9L4 5.500z" fill="#c4c4c4"/></svg></span>
          <span class="navb"><svg viewBox="0 0 11 11"><path d="M9 1v9L3 5.500z" fill="#c4c4c4"/></svg></span>
          <span class="navb"><svg viewBox="0 0 11 11"><path d="M2 1v9l7-4.500z" fill="#2766c2"/></svg></span>
          <span class="navb"><svg viewBox="0 0 11 11"><path d="M1 1v9l6-4.500zM8 1h2v9H8z" fill="#2766c2"/></svg></span>
          <span class="sepv"></span>
          <span class="navb g4"><svg viewBox="0 0 11 11"><path d="M5.500 1l4.500 5H7.500v4h-4V6H1z" fill="#c8c8c8"/></svg></span>
          <span class="navb"><svg viewBox="0 0 11 11"><path d="M5.500 10L1 5h2.500V1h4v4H10z" fill="#3a6ec4"/></svg></span>
          <span class="sepv"></span>
          <span class="ti off"><svg><use href="#ins"/></svg>插入</span>
          <span class="ti off"><svg class="ic"><use href="#dlt"/></svg>删除</span>
          <span class="ti off"><svg><use href="#scl"/></svg>缩尺配筋</span>
          <span class="ti"><svg><use href="#info"/></svg>钢筋信息</span>
          <span class="ti"><svg><use href="#lib"/></svg>钢筋图库</span>
          <span class="ti"><svg><use href="#oth"/></svg>其他<i class="car"></i></span>
          <span class="g4">关闭</span>
          <span class="sepv"></span>
          <span class="g8">单构件钢筋总重(kg)：954.427</span>
        </div>
      </div>

      <div class="tablearea">
        <div class="dotstrip"></div>
        <div class="gridcol">
          <table class="rtable">
            <colgroup><col class="c0"><col class="c1"><col class="c2"><col class="c3"><col class="c4"><col class="c5"><col class="c6"><col class="c7"><col class="c8"><col class="c9"><col class="c10"><col class="c11"><col class="c12"></colgroup>
            <thead><tr><th></th><th>筋号</th><th class="hot">直径<span class="mm">(mm)</span></th><th>级别</th><th>图号</th><th>图形</th><th>计算公式</th><th>公式描述</th><th>长度<span class="mm">(mm)</span></th><th>根数</th><th>搭接</th><th>损耗<span class="mm">(%)</span></th><th>单重<span class="mm">(kg)</span></th></tr></thead>
            <tbody>
              <tr class="a">
                <td class="num mono">1*</td><td class="bl">马凳筋.1</td><td class="sel mono">12</td><td class="cc mono">Φ</td><td class="mono">520</td>
                <td class="fig"><svg viewBox="0 0 200 40">
                  <path d="M58 22l18 10V10l31-6v24l21 7" fill="none" stroke="#111" stroke-width="2"/>
                  <path d="M54 25l6-5M55 24l18 11M108 3h25M108 28h20M120 4v24M80 14l24-4" fill="none" stroke="#111"/>
                  <path d="M120 4l-3 6h6zM120 28l-3-6h6zM80 14l6-3 1 4zM73 35l-6-1 2-4z" fill="#111"/>
                  <text x="46" y="39">200</text><text x="84" y="24">200</text><text x="121" y="21">270</text>
                </svg></td>
                <td class="mono">200+2*270+2*200</td><td class="mono">L1+2*L2+2*L3</td><td class="mono">1140</td><td class="mono">251</td><td class="mono">0</td><td class="mono">0</td><td class="mono">1.012</td>
              </tr>
              <tr class="b">
                <td class="num mono">2</td><td class="bl wr"><span class="mono">U</span>型构造封边筋<span class="mono">.1</span></td><td class="mono">16</td><td class="cc mono">Φ</td><td class="mono">71</td>
                <td class="fig"><svg viewBox="0 0 200 33">
                  <path d="M154 9H58v18h96" fill="none" stroke="#111" stroke-width="2"/>
                  <text x="36" y="21">270</text><text class="rd" x="95" y="23">240</text>
                </svg></td>
                <td class="mono">350-40-40+2*240</td><td>厚度<span class="mono">-</span>保护层<span class="mono">-</span>保护层<span class="mono">+2*</span>弯折</td><td class="mono">750</td><td class="mono">591</td><td class="mono">0</td><td class="mono">0</td><td class="mono">1.185</td>
              </tr>
              <tr class="c"><td class="num mono">3</td><td class="bl"></td><td></td><td></td><td></td><td></td><td></td><td></td><td></td><td></td><td></td><td></td><td></td></tr>
            </tbody>
          </table>
        </div>
      </div>
    </div>

    <section class="prop">
      <div class="ptitle"><span>属性编辑器</span><span class="pins"><svg width="9" height="11" viewBox="0 0 9 11"><path d="M2 1h5v5l1 1v1H1V7l1-1zM4 8h1v3H4zM5 1v5" fill="none" stroke="#111" stroke-width="1.100"/></svg><svg width="9" height="9" viewBox="0 0 9 9"><path d="M1 1l7 7M8 1l-7 7" stroke="#555"/></svg></span></div>
      <table class="ptbl">
        <colgroup><col class="p1"><col class="p2"><col class="p3"></colgroup>
        <thead><tr><th></th><th>属性名称</th><th class="hot">属性值</th></tr></thead>
        <tbody>
          <tr class="act"><td class="num">1</td><td class="nm">名称</td><td class="vl vm">FB-1-4.3</td></tr>
          <tr><td class="num">2</td><td class="nm lnk">混凝土强度等级</td><td class="vm">(C30)</td></tr>
          <tr><td class="num">3</td><td class="nm">厚度<span class="mm">(mm)</span></td><td class="vm">(350)</td></tr>
          <tr><td class="num">4</td><td class="nm">顶标高<span class="mm">(m)</span></td><td class="vm">-3.95</td></tr>
          <tr><td class="num">5</td><td class="nm">底标高<span class="mm">(m)</span></td><td class="vm">-4.3</td></tr>
          <tr><td class="num">6</td><td class="nm">保护层厚度<span class="mm">(mm)</span></td><td class="vm">(40)</td></tr>
          <tr><td class="num">7</td><td class="nm">马凳筋参数图</td><td>Ⅰ型</td></tr>
          <tr><td class="num">8</td><td class="nm">马凳筋信息</td><td class="vm">Φ12@1000*1000</td></tr>
          <tr><td class="num">9</td><td class="nm">线形马凳筋方向</td><td>平行横向受力筋</td></tr>
          <tr><td class="num">10</td><td class="nm lnk">拉筋</td><td></td></tr>
          <tr><td class="num">11</td><td class="nm">拉筋数量计算方式</td><td>向上取整<span class="vm">+1</span></td></tr>
          <tr><td class="num">12</td><td class="nm">马凳筋数量计算方</td><td>向上取整<span class="vm">+1</span></td></tr>
          <tr><td class="num">13</td><td class="nm lnk">筏板侧面纵筋</td><td></td></tr>
          <tr><td class="num">14</td><td class="nm lnk">U形构造封边钢筋</td><td class="vm">Φ16@100</td></tr>
          <tr><td class="num">15</td><td class="nm lnk">U形构造封边钢筋</td><td class="vm">max(15*d,200)</td></tr>
          <tr><td class="num">16</td><td class="nm">归类名称</td><td class="vm">(FB-1-4.3)</td></tr>
          <tr><td class="num">17</td><td class="nm">汇总信息</td><td>筏板基础</td></tr>
          <tr><td class="num">18</td><td class="nm">备注</td><td></td></tr>
          <tr><td class="num">19</td><td class="gr"><span class="pm">+</span>显示样式</td><td></td></tr>
        </tbody>
      </table>
    </section>
  </div>

  <svg class="overlay" width="1283" height="748" viewBox="0 0 1283 748">
    <path d="M1037.500 225.500L1032.500 218.500 424 642.500 417 641 397 668 434 657 430.500 650z" fill="#f41212"/>
    <path d="M397 666L825 675V668L860 681 825 692V685L397 672z" fill="#f41212"/>
  </svg>
</div>
<script src="https://cdn.jsdelivr.net/npm/bootstrap@5.3.0/dist/js/bootstrap.bundle.min.js"></script>
</body>
</html>
